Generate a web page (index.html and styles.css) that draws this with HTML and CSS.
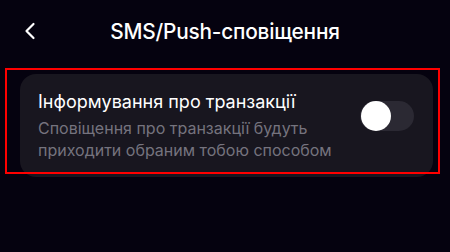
FILE: index.html
```html
<!DOCTYPE html>
<html lang="uk">
<head>
    <meta charset="UTF-8">
    <meta name="viewport" content="width=device-width, initial-scale=1.0">
    <title>SMS/Push-сповіщення</title>
    <link rel="stylesheet" href="styles.css">
</head>
<body>
<div class="screen">
    <div class="header">
        <button class="back" aria-label="Назад">
            <svg width="12" height="18" viewBox="0 0 12 18">
                <path d="M9.5 2 L2.5 9 L9.5 16" fill="none" stroke="#fff" stroke-width="2.2" stroke-linecap="round" stroke-linejoin="round"/>
            </svg>
        </button>
        <div class="title">SMS/Push-сповіщення</div>
    </div>

    <div class="card">
        <div class="card-text">
            <div class="card-title">Інформування про транзакції</div>
            <div class="card-desc">Сповіщення про транзакції будуть приходити обраним тобою способом</div>
        </div>
        <div class="toggle">
            <div class="knob"></div>
        </div>
    </div>

    <div class="highlight"></div>
</div>
</body>
</html>
```

FILE: styles.css
```css
body {
    margin: 0;
    background-color: #05020f;
    font-family: Inter, "Noto Sans", sans-serif;
    color: #fff;
}

.screen {
    position: relative;
    width: 450px;
    height: 252px;
}

.header {
    position: relative;
    height: 62px;
    display: flex;
    align-items: center;
    justify-content: center;
}

.back {
    position: absolute;
    left: 22px;
    top: 22px;
    background: none;
    border: none;
    padding: 0;
    width: 16px;
    height: 18px;
    display: flex;
    align-items: center;
    justify-content: center;
}

.title {
    font-size: 20.8px;
    font-weight: 500;
    letter-spacing: -0.2px;
}

.card {
    margin: 12px 17px 0 20px;
    height: 103px;
    box-sizing: border-box;
    background-color: #18161f;
    border-radius: 16px;
    padding: 0 19px 0 18px;
    display: flex;
    align-items: center;
    gap: 12px;
}

.card-text {
    flex: 1;
}

.card-title {
    font-size: 18px;
    line-height: 22px;
    margin-bottom: 4px;
}

.card-desc {
    font-size: 16px;
    line-height: 22px;
    color: #75737e;
    max-width: 310px;
}

.toggle {
    width: 54px;
    height: 30px;
    border-radius: 15px;
    background-color: #2b2933;
    position: relative;
    flex-shrink: 0;
    margin-top: -19px;
}

.knob {
    position: absolute;
    left: 1px;
    top: 0;
    width: 30px;
    height: 30px;
    border-radius: 50%;
    background-color: #fff;
}

.highlight {
    position: absolute;
    left: 5px;
    top: 68px;
    width: 431px;
    height: 102px;
    border: 2px solid #ff0000;
}
```
